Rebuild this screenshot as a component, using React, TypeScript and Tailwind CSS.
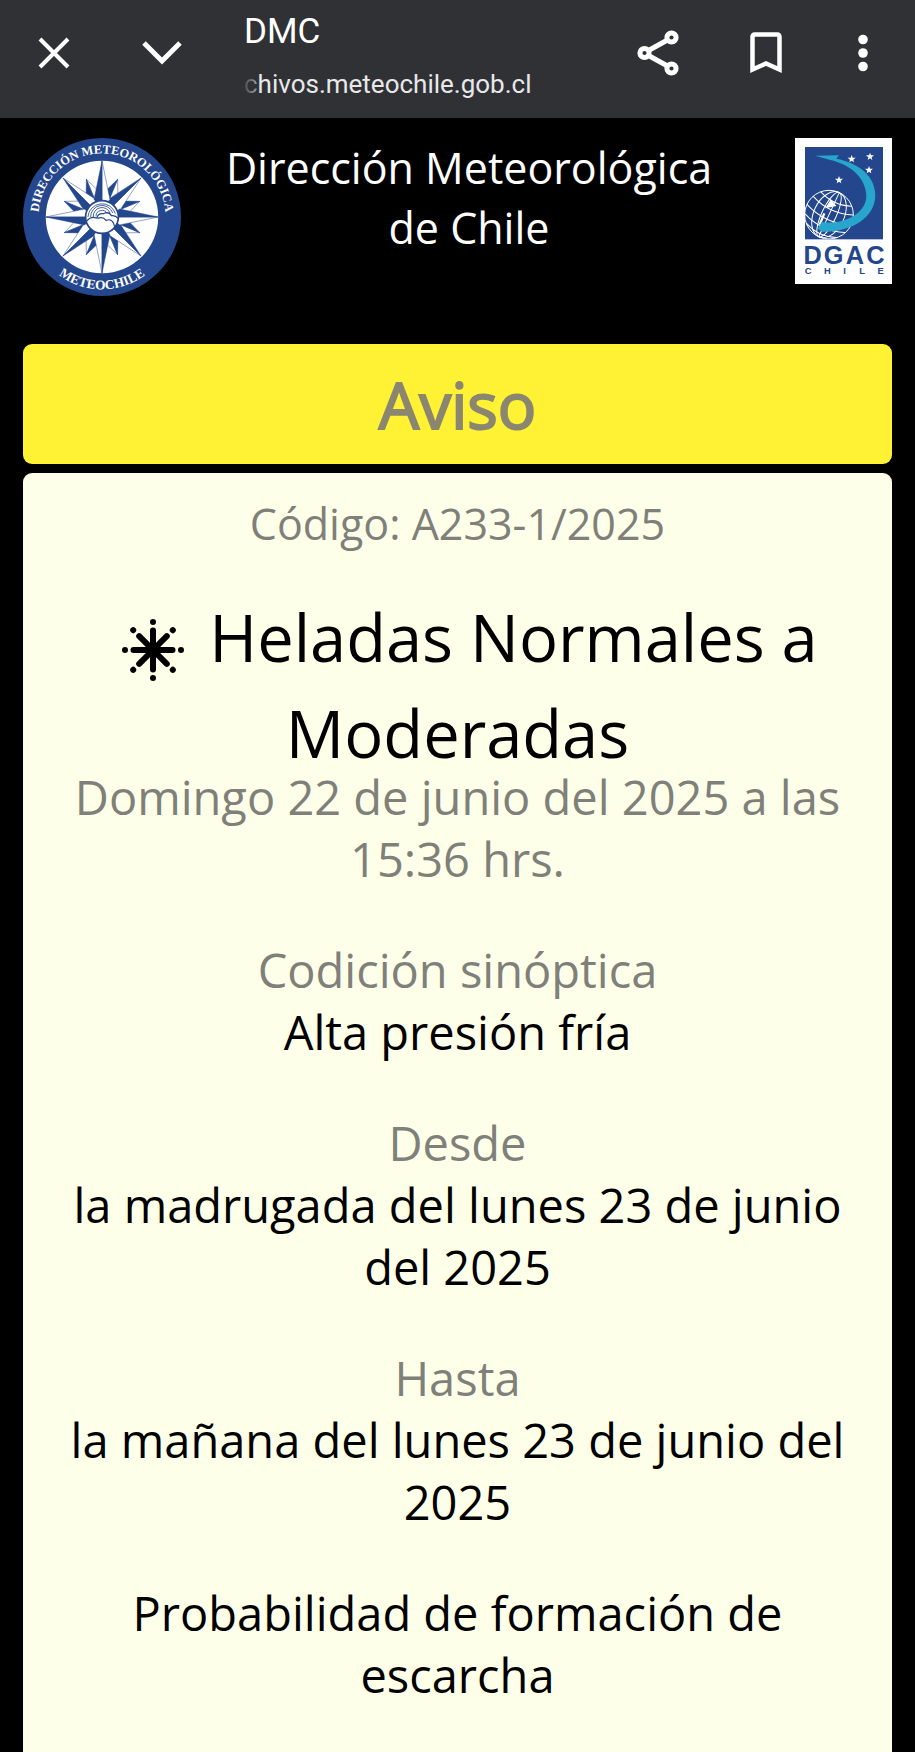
import React from "react";

const BLUE = "#23468c";

function polar(r: number, deg: number): string {
  const a = (deg * Math.PI) / 180;
  return `${(236 + r * Math.sin(a)).toFixed(1)},${(236 - r * Math.cos(a)).toFixed(1)}`;
}

function Ray({ angle, tip, inner, spread }: { angle: number; tip: number; inner: number; spread: number }) {
  return (
    <g stroke={BLUE} strokeWidth="1.5" strokeLinejoin="round">
      <polygon fill="#fff" points={`${polar(tip, angle)} ${polar(inner, angle + spread)} ${polar(20, angle)}`} />
      <polygon fill={BLUE} points={`${polar(tip, angle)} ${polar(inner, angle - spread)} ${polar(20, angle)}`} />
    </g>
  );
}

function MeteoLogo() {
  return (
    <svg viewBox="0 0 472 472" className="size-[158px] shrink-0" role="img" aria-label="Meteochile">
      <defs>
        <path id="arc-top" d="M46 236a190 190 0 0 1 380 0" />
        <path id="arc-bottom" d="M20 236a216 216 0 0 0 432 0" />
      </defs>
      <circle cx="236" cy="236" r="236" fill={BLUE} />
      <circle cx="236" cy="236" r="168" fill="#fff" />
      {[22.5, 67.5, 112.5, 157.5, 202.5, 247.5, 292.5, 337.5].map((a) => (
        <Ray key={a} angle={a} tip={122} inner={72} spread={19} />
      ))}
      {[45, 135, 225, 315].map((a) => (
        <Ray key={a} angle={a} tip={165} inner={58} spread={24} />
      ))}
      {[0, 90, 180, 270].map((a) => (
        <Ray key={a} angle={a} tip={168} inner={58} spread={24} />
      ))}
      <circle cx="236" cy="236" r="49" fill="#fff" stroke={BLUE} strokeWidth="5" />
      <g fill="none" stroke={BLUE} strokeWidth="2.5">
        <path d="M194 236a42 42 0 0 1 82-10" />
        <path d="M202 236a34 34 0 0 1 66-12" />
        <path d="M210 236a26 26 0 0 1 50-12" />
        <path d="M218 234a18 18 0 0 1 34-8" />
        <path d="M190 248q14-16 30-8M220 240q4-16 20-14 16-8 24 6 12-2 20 8" strokeWidth="3.5" />
        <path d="M222 240q18-6 26 6 16-6 22 8t4 18" strokeWidth="3.5" />
      </g>
      <g fill="#fff" fontFamily="Liberation Serif, serif" fontWeight="700" textAnchor="middle">
        <text fontSize="37">
          <textPath href="#arc-top" startOffset="50%">DIRECCIÓN METEOROLÓGICA</textPath>
        </text>
        <text fontSize="40">
          <textPath href="#arc-bottom" startOffset="50%">METEOCHILE</textPath>
        </text>
      </g>
    </svg>
  );
}

const STAR = "0,-12 3,-4 12,-4 5,2 7,10 0,5 -7,10 -5,2 -12,-4 -3,-4";

function DgacLogo() {
  return (
    <svg viewBox="0 0 291 438" className="w-[97px] shrink-0" role="img" aria-label="DGAC Chile">
      <defs>
        <clipPath id="panel">
          <rect x="30" y="27" width="234" height="277" />
        </clipPath>
      </defs>
      <rect width="291" height="438" fill="#fff" />
      <rect x="30" y="27" width="234" height="277" fill={BLUE} />
      <g clipPath="url(#panel)" fill="none" stroke="#fff" strokeWidth="3">
        <circle cx="102" cy="230" r="73" />
        <g transform="rotate(25 102 230)">
          <ellipse cx="102" cy="230" rx="22" ry="73" />
          <ellipse cx="102" cy="230" rx="46" ry="73" />
          <path d="M102 157v146M29 230q73 30 146 0M36 200q66 28 132 0M50 178q52 22 104 0M36 258q66 28 132 0M52 282q50 22 100 0" />
        </g>
        <path d="M108 190l10 12-20 4zM88 226l-14 34" fill="#fff" strokeWidth="7" />
      </g>
      <path
        d="M60 53L132 52 124 62C190 74 241 114 241 172 241 240 166 284 82 281L68 272 80 252C146 262 212 226 214 176 214 116 160 78 106 66Z"
        fill="#27a5cc"
      />
      <g fill="#fff">
        <polygon points={STAR} transform="translate(170 63)" />
        <polygon points={STAR} transform="translate(225 56)" />
        <polygon points={STAR} transform="translate(222 96)" />
        <polygon points={STAR} transform="translate(132 126)" />
      </g>
      <g fill={BLUE} fontFamily="Liberation Sans, sans-serif" fontWeight="700" textAnchor="middle">
        <text fontSize="76" y="378">
          <tspan x="53">D</tspan>
          <tspan x="116">G</tspan>
          <tspan x="180">A</tspan>
          <tspan x="241">C</tspan>
        </text>
        <text fontSize="28" y="409">
          <tspan x="39">C</tspan>
          <tspan x="97">H</tspan>
          <tspan x="149">I</tspan>
          <tspan x="201">L</tspan>
          <tspan x="257">E</tspan>
        </text>
      </g>
    </svg>
  );
}

function FrostIcon() {
  const turns = [0, 45, 90, 135, 180, 225, 270, 315];
  return (
    <svg viewBox="-32 -32 64 64" className="mr-6 ml-6 inline-block size-16 align-[-20px]" aria-hidden="true">
      {turns.map((a) => (
        <g key={a} transform={`rotate(${a})`}>
          <path d="M0 0V-19.500" stroke="#000" strokeWidth="6" strokeLinecap="round" />
          <circle cy="-28" r="3" />
        </g>
      ))}
      <circle r="7" />
    </svg>
  );
}

function IconButton({ label, children }: { label: string; children: React.ReactNode }) {
  return (
    <button type="button" aria-label={label} className="flex size-[60px] items-center justify-center">
      {children}
    </button>
  );
}

function BrowserBar() {
  return (
    <div className="flex h-[118px] items-start bg-[#303135] pr-[33px] pl-6 text-white">
      <div className="flex gap-12 pt-[23px]">
        <IconButton label="Cerrar">
          <svg viewBox="0 0 32 32" className="size-8" fill="none" stroke="currentColor" strokeWidth="4">
            <path d="M2 2l28 28M30 2L2 30" />
          </svg>
        </IconButton>
        <IconButton label="Minimizar">
          <svg viewBox="0 0 40 24" className="w-10" fill="none" stroke="currentColor" strokeWidth="5">
            <path d="M2 2l18 18L38 2" />
          </svg>
        </IconButton>
      </div>
      <div className="ml-[52px] min-w-0 flex-1 pt-[6px] font-['Roboto',sans-serif]">
        <div className="text-[35px] leading-[52px]">DMC</div>
        <div className="text-[26px] leading-[52px] text-[#e8e8ea]">
          <span className="bg-gradient-to-r from-[#4a4b4f] to-[#a0a0a3] bg-clip-text text-transparent">c</span>
          hivos.meteochile.gob.cl
        </div>
      </div>
      <div className="flex items-center gap-12 pt-[23px]">
        <IconButton label="Compartir">
          <svg viewBox="0 0 42 46" className="w-[42px]" fill="none" stroke="currentColor" strokeWidth="5">
            <circle cx="7.500" cy="23" r="4.600" />
            <circle cx="34.500" cy="7.500" r="4.600" />
            <circle cx="34.500" cy="38.500" r="4.600" />
            <path d="M11.500 20.500L30.500 10M11.500 25.500L30.500 36" />
          </svg>
        </IconButton>
        <IconButton label="Guardar">
          <svg viewBox="0 0 32 42" className="w-8" fill="none" stroke="currentColor" strokeWidth="4.500">
            <path d="M2.500 37.500V4.500a2 2 0 0 1 2-2h23a2 2 0 0 1 2 2v33L16 31.500z" />
          </svg>
        </IconButton>
        <button type="button" aria-label="Más opciones" className="flex h-[60px] w-[38px] items-center justify-center">
          <svg viewBox="0 0 10 38" className="w-[10px]" fill="currentColor">
            <circle cx="5" cy="5.500" r="4.800" />
            <circle cx="5" cy="19" r="4.800" />
            <circle cx="5" cy="32.500" r="4.800" />
          </svg>
        </button>
      </div>
    </div>
  );
}

function Detail({ label, children }: { label?: string; children: React.ReactNode }) {
  return (
    <div className="mt-[49px]">
      {label && <h3 className="text-[#80807a]">{label}</h3>}
      <p>{children}</p>
    </div>
  );
}

export default function App() {
  return (
    <div className="min-h-screen bg-black font-['Open_Sans','Noto_Sans',sans-serif]">
      <BrowserBar />
      <div className="px-[23px]">
        <header className="flex items-start pt-5">
          <MeteoLogo />
          <h1 className="flex-1 pr-[62px] pl-6 text-center text-[43px] leading-[60px] text-white">
            Dirección Meteorológica <span className="whitespace-nowrap">de Chile</span>
          </h1>
          <DgacLogo />
        </header>
        <main>
          <div className="mt-12 flex h-[120px] items-center justify-center rounded-[9px] bg-[#fff133] pt-0.5 text-[64px] text-[#8a8670] [-webkit-text-stroke:2px_#8a8670]">
            Aviso
          </div>
          <article className="mt-[9px] rounded-t-[9px] bg-[#feffe8] px-8 pt-5 pb-12 text-center text-[47px] leading-[62px] text-black">
            <p className="text-[43px] text-[#80807a]">Código: A233-1/2025</p>
            <h2 className="mt-[34px] -mb-[15px] text-[65px] leading-[96px]">
              <FrostIcon />
              Heladas Normales a Moderadas
            </h2>
            <p className="text-[#80807a]">Domingo 22 de junio del 2025 a las 15:36 hrs.</p>
            <Detail label="Codición sinóptica">Alta presión fría</Detail>
            <Detail label="Desde">la madrugada del lunes 23 de junio del 2025</Detail>
            <Detail label="Hasta">la mañana del lunes 23 de junio del 2025</Detail>
            <Detail>Probabilidad de formación de escarcha</Detail>
          </article>
        </main>
      </div>
    </div>
  );
}
